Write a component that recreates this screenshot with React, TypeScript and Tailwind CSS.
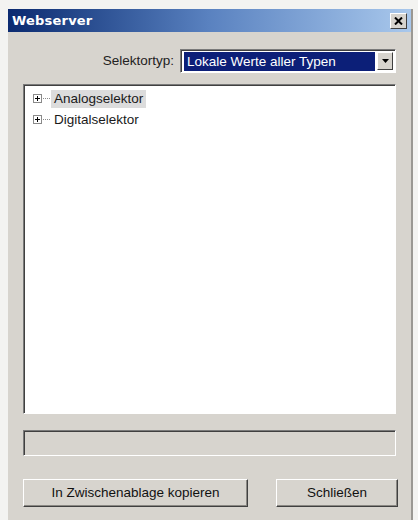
import React from "react";

const ui = { fontFamily: '"Liberation Sans", Arial, sans-serif' };

function PlusBox() {
  return (
    <svg width="9" height="9" viewBox="0 0 9 9" className="shrink-0">
      <rect x="0.5" y="0.5" width="8" height="8" fill="#fff" stroke="#8a8a8a" />
      <path d="M2 4.5h5M4.5 2v5" stroke="#000" strokeWidth="1" />
    </svg>
  );
}

function TreeRow({ label, selected }: { label: string; selected?: boolean }) {
  return (
    <div className="flex items-center h-[21px]">
      <PlusBox />
      <div className="w-[7px] h-0 border-t border-dotted border-[#8a8a8a] mx-[1px]" />
      <span
        className={`px-[3px] leading-[18px] text-[13.5px] text-[#1a1a1a] ${selected ? "bg-[#dcdcdc]" : ""}`}
      >
        {label}
      </span>
    </div>
  );
}

export default function App() {
  return (
    <div className="w-[418px] h-[520px] bg-[#f3f3f1] overflow-hidden" style={ui}>
      <div className="ml-[8px] mt-[9px] w-[405px] h-[520px] bg-[#d7d4ce] border-r-2 border-[#9a9893] flex flex-col">
        {/* title bar */}
        <div className="h-[23px] flex items-center justify-between pl-[4px] pr-[3px] bg-gradient-to-r from-[#0b2a70] via-[#5a82c0] to-[#a9c8ec]">
          <span
            className="text-white font-bold text-[13px] tracking-[0.2px]"
            style={{ fontFamily: '"DejaVu Sans", Verdana, sans-serif' }}
          >
            Webserver
          </span>
          <div className="w-[17px] h-[16px] mr-[1px] bg-[#d7d4ce] border border-t-white border-l-white border-r-[#404040] border-b-[#404040] flex items-center justify-center">
            <svg width="9" height="8" viewBox="0 0 9 8">
              <path d="M1 0.5l7 7M8 0.5l-7 7" stroke="#000" strokeWidth="2" />
            </svg>
          </div>
        </div>

        <div className="flex flex-col px-[15px]">
          {/* selector row */}
          <div className="mt-[17px] flex items-center justify-end gap-[6px]">
            <span className="text-[13.5px] text-[#222]">Selektortyp:</span>
            <div className="w-[216px] h-[24px] bg-white border border-t-[#7a7a7a] border-l-[#7a7a7a] border-r-white border-b-white shadow-[inset_1px_1px_0_#404040] flex items-center p-[2px] pl-[3px]">
              <div className="flex-1 h-[19px] bg-[#0c1f78] text-white text-[13.5px] leading-[19px] pl-[3px]">
                Lokale Werte aller Typen
              </div>
              <div className="w-[16px] h-[18px] ml-[2px] bg-[#d7d4ce] border border-t-white border-l-white border-r-[#404040] border-b-[#404040] flex items-center justify-center">
                <svg width="7" height="4" viewBox="0 0 7 4">
                  <path d="M0 0h7L3.5 4z" fill="#000" />
                </svg>
              </div>
            </div>
          </div>

          {/* tree view */}
          <div className="mt-[11px] h-[330px] bg-white border border-t-[#7a7a7a] border-l-[#7a7a7a] border-r-white border-b-white shadow-[inset_1px_1px_0_#404040] pl-[9px] pt-[3px]">
            <TreeRow label="Analogselektor" selected />
            <TreeRow label="Digitalselektor" />
          </div>

          {/* status field */}
          <div className="mt-[16px] h-[26px] bg-[#d7d4ce] border border-t-[#7a7a7a] border-l-[#7a7a7a] border-r-white border-b-white shadow-[inset_1px_1px_0_#404040]" />

          {/* buttons */}
          <div className="mt-[23px] flex justify-between">
            <button className="w-[225px] h-[28px] bg-[#d7d4ce] border border-t-white border-l-white border-r-[#404040] border-b-[#404040] shadow-[inset_-1px_-1px_0_#8a8883] text-[13.5px] text-[#111]">
              In Zwischenablage kopieren
            </button>
            <button className="w-[122px] h-[28px] mr-[-2px] bg-[#d7d4ce] border border-t-white border-l-white border-r-[#404040] border-b-[#404040] shadow-[inset_-1px_-1px_0_#8a8883] text-[13.5px] text-[#111]">
              Schließen
            </button>
          </div>
        </div>
      </div>
    </div>
  );
}
